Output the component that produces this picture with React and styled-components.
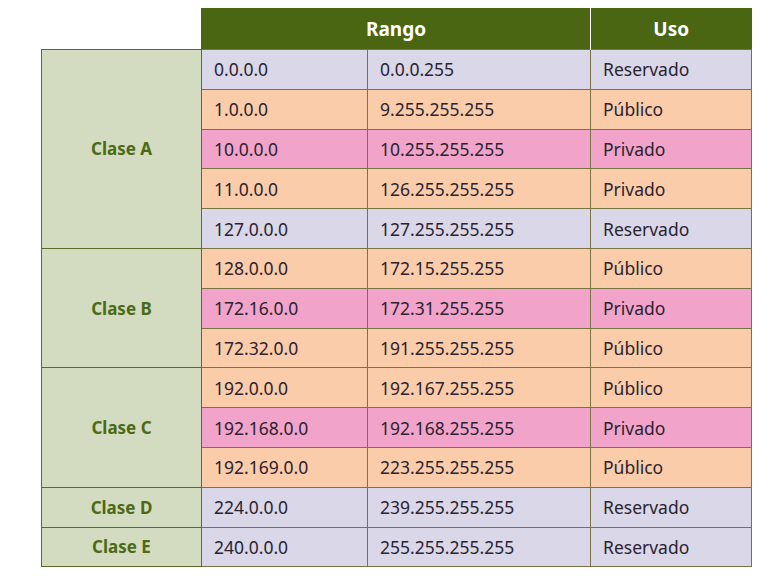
import React from "react";
import styled, { createGlobalStyle } from "styled-components";

const GlobalStyle = createGlobalStyle`
  body {
    margin: 0;
    background: #ffffff;
    font-family: "Noto Sans", "Open Sans", sans-serif;
  }
`;

const colores = {
  r: "#d9d7e8",
  p: "#fbcca9",
  v: "#f1a3c9",
};

const clases = [
  {
    nombre: "Clase A",
    filas: [
      ["0.0.0.0", "0.0.0.255", "Reservado", "r"],
      ["1.0.0.0", "9.255.255.255", "Público", "p"],
      ["10.0.0.0", "10.255.255.255", "Privado", "v"],
      ["11.0.0.0", "126.255.255.255", "Privado", "p"],
      ["127.0.0.0", "127.255.255.255", "Reservado", "r"],
    ],
  },
  {
    nombre: "Clase B",
    filas: [
      ["128.0.0.0", "172.15.255.255", "Público", "p"],
      ["172.16.0.0", "172.31.255.255", "Privado", "v"],
      ["172.32.0.0", "191.255.255.255", "Público", "p"],
    ],
  },
  {
    nombre: "Clase C",
    filas: [
      ["192.0.0.0", "192.167.255.255", "Público", "p"],
      ["192.168.0.0", "192.168.255.255", "Privado", "v"],
      ["192.169.0.0", "223.255.255.255", "Público", "p"],
    ],
  },
  {
    nombre: "Clase D",
    filas: [["224.0.0.0", "239.255.255.255", "Reservado", "r"]],
  },
  {
    nombre: "Clase E",
    filas: [["240.0.0.0", "255.255.255.255", "Reservado", "r"]],
  },
];

const App = () => {
  return (
    <Pagina>
      <GlobalStyle />
      <Tabla>
        <colgroup>
          <col style={{ width: 160 }} />
          <col style={{ width: 166 }} />
          <col style={{ width: 223 }} />
          <col style={{ width: 161 }} />
        </colgroup>
        <thead>
          <tr>
            <Vacia />
            <Cabecera colSpan={2}>Rango</Cabecera>
            <Cabecera $separada>Uso</Cabecera>
          </tr>
        </thead>
        <tbody>
          {clases.map((clase) =>
            clase.filas.map((fila, i) => (
              <tr key={fila[0]}>
                {i === 0 && (
                  <Clase rowSpan={clase.filas.length}>{clase.nombre}</Clase>
                )}
                <Celda $color={colores[fila[3]]}>{fila[0]}</Celda>
                <Celda $color={colores[fila[3]]}>{fila[1]}</Celda>
                <Celda $color={colores[fila[3]]}>{fila[2]}</Celda>
              </tr>
            ))
          )}
        </tbody>
      </Tabla>
    </Pagina>
  );
};

const Pagina = styled.div`
  padding: 8px 0 0 41px;
`;

const Tabla = styled.table`
  border-collapse: collapse;
  table-layout: fixed;
  width: 711px;
  font-size: 17.5px;
  color: #2b2330;
`;

const Vacia = styled.th`
  background: transparent;
  border: none;
`;

const Cabecera = styled.th`
  height: 41px;
  padding: 0;
  background: #4a6613;
  color: #ffffff;
  font-size: 19px;
  font-weight: 700;
  text-align: center;
  border-left: 1px solid ${(p) => (p.$separada ? "#ffffff" : "#4a6613")};
`;

const Clase = styled.td`
  background: #d3dcc0;
  color: #4c6a15;
  font-weight: 700;
  font-size: 17px;
  text-align: center;
  border: 1px solid #5e6b2e;
`;

const Celda = styled.td`
  height: 38.8px;
  padding: 0 12px;
  background: ${(p) => p.$color};
  border: 1px solid #7a7444;
  white-space: nowrap;
`;

export default App;
